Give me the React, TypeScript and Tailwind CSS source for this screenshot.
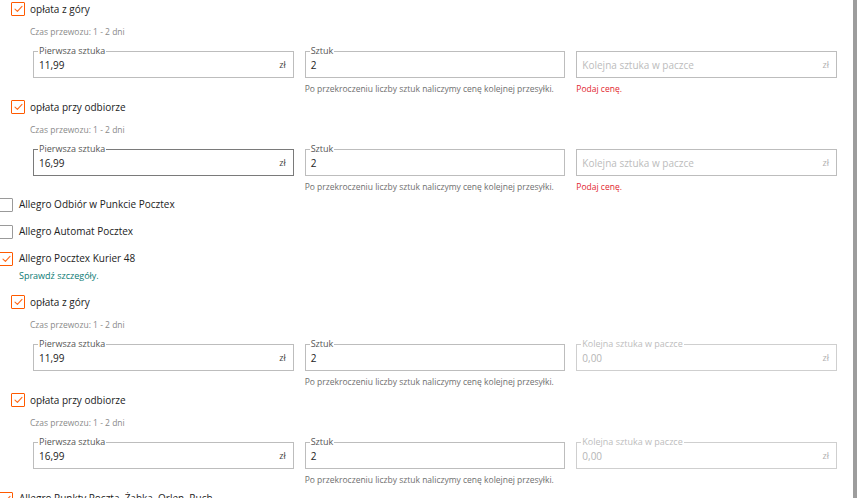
import React from 'react';

const ORANGE = 'border-[#ff5a00]';

const Checkbox = ({ checked }: { checked: boolean }) => (
    <span
        className={`flex h-[14px] w-[14px] shrink-0 items-center justify-center rounded-[1px] border bg-white ${checked ? ORANGE : 'border-[#9a9a9a]'}`}
    >
        {checked && (
            <svg width="9" height="8" viewBox="0 0 9 8" fill="none">
                <path d="M1 4.2 L3.4 6.4 L8 1.4" stroke="#ff6a1a" strokeWidth="1.1" strokeLinecap="round" strokeLinejoin="round" />
            </svg>
        )}
    </span>
);

interface FieldProps {
    label?: string;
    value?: string;
    placeholder?: string;
    disabled?: boolean;
    dark?: boolean;
    suffix?: boolean;
}

const Field: React.FC<FieldProps> = ({ label, value, placeholder, disabled, dark, suffix }) => {
    const border = dark ? 'border-[#7a7a7a]' : disabled ? 'border-[#cfcfcf]' : 'border-[#bdbdbd]';
    return (
        <div className={`relative flex h-[27px] items-center border ${border} bg-white pl-[5px] pr-[7px]`}>
            {label && (
                <span
                    className={`absolute -top-[7px] left-[4px] bg-white px-[1px] text-[9px] leading-[12px] ${disabled ? 'text-[#bdbdbd]' : 'text-[#555]'}`}
                >
                    {label}
                </span>
            )}
            <span
                className={`flex-1 text-[10px] leading-[14px] ${value ? (disabled ? 'text-[#b5b5b5]' : 'text-[#222]') : 'text-[#bcbcbc]'}`}
            >
                {value || placeholder}
            </span>
            {suffix && (
                <span className={`text-[9px] ${disabled || !value ? 'text-[#b0b0b0]' : 'text-[#444]'}`}>zł</span>
            )}
        </div>
    );
};

interface GroupProps {
    title: string;
    first: string;
    darkFirst?: boolean;
    nextDisabled?: boolean;
}

const PaymentGroup: React.FC<GroupProps> = ({ title, first, darkFirst, nextDisabled }) => (
    <div className="pl-[11px] pb-[6px]">
        <div className="flex h-[14px] items-center gap-[5px]">
            <Checkbox checked />
            <span className="text-[10px] text-[#222]">{title}</span>
        </div>
        <div className="mt-[10px] pl-[19px] text-[8.5px] leading-[11px] text-[#8a8a8a]">Czas przewozu: 1 - 2 dni</div>
        <div className="mt-[14px] ml-[22px] mr-[16px] grid grid-cols-3 gap-x-[11px]">
            <Field label="Pierwsza sztuka" value={first} dark={darkFirst} suffix />
            <Field label="Sztuk" value="2" />
            {nextDisabled ? (
                <Field label="Kolejna sztuka w paczce" value="0,00" disabled suffix />
            ) : (
                <Field placeholder="Kolejna sztuka w paczce" suffix />
            )}
            <div />
            <div className="mt-[5px] whitespace-nowrap text-[8.5px] leading-[11px] text-[#6f6f6f]">
                Po przekroczeniu liczby sztuk naliczymy cenę kolejnej przesyłki.
            </div>
            <div className="mt-[5px] text-[8.5px] leading-[11px] text-[#e2262f]">{nextDisabled ? '' : 'Podaj cenę.'}</div>
        </div>
    </div>
);

const Carrier = ({ name, checked }: { name: string; checked?: boolean }) => (
    <div className="-ml-[1px] flex h-[27px] items-center gap-[6px]">
        <Checkbox checked={!!checked} />
        <span className="text-[10px] text-[#222]">{name}</span>
    </div>
);

export default function App() {
    return (
        <div className="flex h-[498px] w-[857px] overflow-hidden bg-white" style={{ fontFamily: '"Open Sans", "Noto Sans", sans-serif' }}>
            <div className="flex-1 pt-[2px]">
                <PaymentGroup title="opłata z góry" first="11,99" />
                <PaymentGroup title="opłata przy odbiorze" first="16,99" darkFirst />
                <div className="-mt-[7px]">
                    <Carrier name="Allegro Odbiór w Punkcie Pocztex" />
                    <Carrier name="Allegro Automat Pocztex" />
                    <Carrier name="Allegro Pocztex Kurier 48" checked />
                    <div className="-mt-[2px] pl-[19px] text-[9px] leading-[12px] text-[#0a7a74]">Sprawdź szczegóły.</div>
                </div>
                <div className="mt-[13px]">
                    <PaymentGroup title="opłata z góry" first="11,99" nextDisabled />
                </div>
                <PaymentGroup title="opłata przy odbiorze" first="16,99" nextDisabled />
                <div className="-mt-[6px]">
                    <Carrier name="Allegro Punkty Poczta, Żabka, Orlen, Ruch" checked />
                </div>
            </div>
            <div className="w-[4px] shrink-0 bg-[#9d9d9d]" />
        </div>
    );
}
